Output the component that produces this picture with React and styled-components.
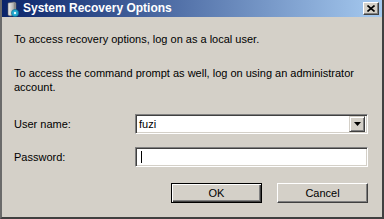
import React from "react";
import styled, { createGlobalStyle } from "styled-components";

const GlobalStyle = createGlobalStyle`
  html, body {
    margin: 0;
    padding: 0;
    background: #d4d0c8;
  }
  * {
    box-sizing: border-box;
  }
`;

const AppIcon = () => (
  <svg width="16" height="16" viewBox="0 0 16 16">
    <defs>
      <linearGradient id="slab" x1="0" y1="0" x2="1" y2="0">
        <stop offset="0" stopColor="#f2f2f2" />
        <stop offset="0.6" stopColor="#b8b8b8" />
        <stop offset="1" stopColor="#7a7a7a" />
      </linearGradient>
    </defs>
    <path d="M4 2 L10 1 L12 2 L12 14 L6 15 L4 14 Z" fill="url(#slab)" stroke="#5c5c5c" strokeWidth="0.6" />
    <path d="M10 1 L12 2 L12 14 L10 14.4 Z" fill="#8a8a8a" />
    <circle cx="11" cy="12" r="3.6" fill="#1fa8cf" stroke="#0d6f8f" strokeWidth="0.6" />
    <circle cx="11" cy="12" r="1.2" fill="#e6fbff" />
  </svg>
);

const CloseGlyph = () => (
  <svg width="8" height="7" viewBox="0 0 8 7">
    <path d="M0.5 0.5 L7.5 6.5 M7.5 0.5 L0.5 6.5" stroke="#000" strokeWidth="1.6" />
  </svg>
);

const DownArrow = () => (
  <svg width="7" height="4" viewBox="0 0 7 4">
    <path d="M0 0 H7 L3.5 4 Z" fill="#000" />
  </svg>
);

export default function App() {
  return (
    <>
      <GlobalStyle />
      <Window>
        <TitleBar>
          <AppIcon />
          <TitleText>System Recovery Options</TitleText>
          <CloseButton>
            <CloseGlyph />
          </CloseButton>
        </TitleBar>
        <Body>
          <Message $top={16} $lh={13}>
            To access recovery options, log on as a local user.
          </Message>
          <Message $top={20} $lh={14}>
            To access the command prompt as well, log on using an administrator account.
          </Message>
          <FieldRow $top={20}>
            <Label>User name:</Label>
            <Combo>
              <FieldValue>fuzi</FieldValue>
              <DropButton>
                <DownArrow />
              </DropButton>
            </Combo>
          </FieldRow>
          <FieldRow $top={13}>
            <Label>Password:</Label>
            <TextBox>
              <Caret />
            </TextBox>
          </FieldRow>
          <ButtonRow>
            <PushButton $isDefault>OK</PushButton>
            <PushButton>Cancel</PushButton>
          </ButtonRow>
        </Body>
      </Window>
    </>
  );
}

const Window = styled.div`
  width: 384px;
  height: 219px;
  display: flex;
  flex-direction: column;
  background: #d4d0c8;
  border-left: 2px solid #6a6a6a;
  border-right: 2px solid #404040;
  border-bottom: 2px solid #404040;
  font-family: "Liberation Sans", Arial, sans-serif;
  color: #000;
`;

const TitleBar = styled.div`
  height: 17px;
  display: flex;
  align-items: center;
  padding: 0 3px 0 2px;
  background: linear-gradient(to right, #0a246a, #a6caf0);
`;

const TitleText = styled.span`
  margin-left: 3px;
  flex: 1;
  color: #fff;
  font-weight: bold;
  font-size: 12px;
  line-height: 17px;
  white-space: nowrap;
`;

const CloseButton = styled.div`
  width: 16px;
  height: 13px;
  display: flex;
  align-items: center;
  justify-content: center;
  background: #d4d0c8;
  border-top: 1px solid #fff;
  border-left: 1px solid #fff;
  border-right: 1px solid #404040;
  border-bottom: 1px solid #404040;
  box-shadow: inset -1px -1px 0 #808080;
`;

const Body = styled.div`
  flex: 1;
  display: flex;
  flex-direction: column;
  padding: 0 14px 0 12px;
`;

const Message = styled.p`
  margin: ${(p) => p.$top}px 0 0;
  font-size: 11px;
  line-height: ${(p) => p.$lh}px;
`;

const FieldRow = styled.div`
  margin-top: ${(p) => p.$top}px;
  display: grid;
  grid-template-columns: 121px 1fr;
  align-items: center;
  height: 20px;
`;

const Label = styled.span`
  font-size: 11px;
`;

const sunken = `
  height: 20px;
  background: #fff;
  border-top: 1px solid #808080;
  border-left: 1px solid #808080;
  border-right: 1px solid #fff;
  border-bottom: 1px solid #fff;
  box-shadow: inset 1px 1px 0 #404040, inset -1px -1px 0 #d4d0c8;
`;

const Combo = styled.div`
  ${sunken}
  display: flex;
  align-items: center;
  padding: 2px;
`;

const FieldValue = styled.span`
  flex: 1;
  font-size: 11px;
  padding-left: 1px;
`;

const DropButton = styled.div`
  width: 16px;
  height: 16px;
  display: flex;
  align-items: center;
  justify-content: center;
  background: #d4d0c8;
  border-top: 1px solid #d4d0c8;
  border-left: 1px solid #d4d0c8;
  border-right: 1px solid #404040;
  border-bottom: 1px solid #404040;
  box-shadow: inset 1px 1px 0 #fff, inset -1px -1px 0 #808080;
`;

const TextBox = styled.div`
  ${sunken}
  display: flex;
  align-items: center;
  padding-left: 5px;
`;

const Caret = styled.div`
  width: 1px;
  height: 12px;
  background: #000;
`;

const ButtonRow = styled.div`
  margin-top: 16px;
  display: flex;
  justify-content: flex-end;
  gap: 15px;
`;

const PushButton = styled.div`
  width: 91px;
  height: 20px;
  display: flex;
  align-items: center;
  justify-content: center;
  font-size: 11px;
  background: #d4d0c8;
  ${(p) =>
    p.$isDefault
      ? `
    border: 1px solid #000;
    box-shadow: inset 1px 1px 0 #fff, inset -1px -1px 0 #404040, inset -2px -2px 0 #808080;
  `
      : `
    border-top: 1px solid #fff;
    border-left: 1px solid #fff;
    border-right: 1px solid #404040;
    border-bottom: 1px solid #404040;
    box-shadow: inset -1px -1px 0 #808080;
  `}
`;
